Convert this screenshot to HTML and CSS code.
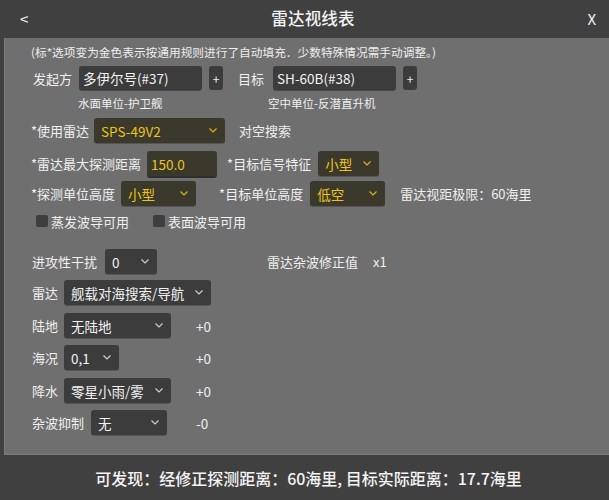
FILE: index.html
```html
<!DOCTYPE html>
<html lang="zh">
<head>
<meta charset="utf-8">
<link rel="stylesheet" href="styles.css">
</head>
<body>
<div class="app">
  <header class="topbar">
    <span class="back">&lt;</span>
    <span class="title">雷达视线表</span>
    <span class="close">X</span>
  </header>
  <main class="panel">
    <p class="note">(标*选项变为金色表示按通用规则进行了自动填充．少数特殊情况需手动调整。)</p>

    <div class="row r-units">
      <span class="lbl">发起方</span>
      <div class="field unit">多伊尔号(#37)</div>
      <div class="plus">+</div>
      <span class="lbl lbl-target">目标</span>
      <div class="field unit unit2">SH-60B(#38)</div>
      <div class="plus">+</div>
    </div>
    <div class="row r-sub">
      <span class="sub sub1">水面单位-护卫舰</span>
      <span class="sub">空中单位-反潜直升机</span>
    </div>

    <div class="row r-radar">
      <span class="lbl">*使用雷达</span>
      <div class="sel gold w-radar"><span>SPS-49V2</span><svg class="chev" viewBox="0 0 8 5"><polyline points="0.5,0.5 4,4 7.5,0.5"/></svg></div>
      <span class="lbl lbl-mode">对空搜索</span>
    </div>

    <div class="row r-range">
      <span class="lbl">*雷达最大探测距离</span>
      <div class="field gold num">150.0</div>
      <span class="lbl lbl-sig">*目标信号特征</span>
      <div class="sel gold w-sig"><span>小型</span><svg class="chev" viewBox="0 0 8 5"><polyline points="0.5,0.5 4,4 7.5,0.5"/></svg></div>
    </div>

    <div class="row r-height">
      <span class="lbl">*探测单位高度</span>
      <div class="sel gold w-h"><span>小型</span><svg class="chev" viewBox="0 0 8 5"><polyline points="0.5,0.5 4,4 7.5,0.5"/></svg></div>
      <span class="lbl lbl-th">*目标单位高度</span>
      <div class="sel gold w-h"><span>低空</span><svg class="chev" viewBox="0 0 8 5"><polyline points="0.5,0.5 4,4 7.5,0.5"/></svg></div>
      <span class="lbl lbl-lim">雷达视距极限：60海里</span>
    </div>

    <div class="row r-checks">
      <label class="chk"><span class="box"></span>蒸发波导可用</label>
      <label class="chk chk2"><span class="box"></span>表面波导可用</label>
    </div>

    <div class="row r-jam">
      <span class="lbl">进攻性干扰</span>
      <div class="sel w-jam"><span>0</span><svg class="chev" viewBox="0 0 8 5"><polyline points="0.5,0.5 4,4 7.5,0.5"/></svg></div>
      <span class="lbl lbl-clutter">雷达杂波修正值</span>
      <span class="lbl lbl-x">x1</span>
    </div>

    <div class="row r-crad">
      <span class="lbl">雷达</span>
      <div class="sel w-crad"><span>舰载对海搜索/导航</span><svg class="chev" viewBox="0 0 8 5"><polyline points="0.5,0.5 4,4 7.5,0.5"/></svg></div>
    </div>

    <div class="row r-land">
      <div class="grp">
        <span class="lbl">陆地</span>
        <div class="sel w-land"><span>无陆地</span><svg class="chev" viewBox="0 0 8 5"><polyline points="0.5,0.5 4,4 7.5,0.5"/></svg></div>
      </div>
      <span class="val">+0</span>
    </div>

    <div class="row r-sea">
      <div class="grp">
        <span class="lbl">海况</span>
        <div class="sel w-sea"><span>0,1</span><svg class="chev" viewBox="0 0 8 5"><polyline points="0.5,0.5 4,4 7.5,0.5"/></svg></div>
      </div>
      <span class="val">+0</span>
    </div>

    <div class="row r-rain">
      <div class="grp">
        <span class="lbl">降水</span>
        <div class="sel w-land"><span>零星小雨/雾</span><svg class="chev" viewBox="0 0 8 5"><polyline points="0.5,0.5 4,4 7.5,0.5"/></svg></div>
      </div>
      <span class="val">+0</span>
    </div>

    <div class="row r-supp">
      <div class="grp grp-wide">
        <span class="lbl">杂波抑制</span>
        <div class="sel w-supp"><span>无</span><svg class="chev" viewBox="0 0 8 5"><polyline points="0.5,0.5 4,4 7.5,0.5"/></svg></div>
      </div>
      <span class="val">-0</span>
    </div>
  </main>
  <footer class="result">可发现：经修正探测距离：60海里, 目标实际距离：17.7海里</footer>
</div>
</body>
</html>
```

FILE: styles.css
```css
* { box-sizing: border-box; }
html, body {
  margin: 0;
  padding: 0;
  background: #404040;
}
body {
  font-family: "Noto Sans CJK SC", "Noto Sans", sans-serif;
  color: #f0f0f0;
  width: 609px;
  height: 500px;
  overflow: hidden;
}
.app {
  display: flex;
  flex-direction: column;
  height: 500px;
}
.topbar {
  height: 38px;
  display: flex;
  align-items: center;
  justify-content: space-between;
  padding: 0 13px 2px 20px;
  color: #f2f2f2;
}
.back { font-size: 15px; width: 20px; }
.close { font-size: 15px; width: 20px; text-align: right; }
.title { font-size: 16.5px; font-weight: 500; letter-spacing: 0.2px; padding-left: 10px; }

.panel {
  margin-left: 4px;
  height: 417px;
  background: #6f6f6f;
  border-left: 1px solid #7c7c7c;
  border-bottom: 1px solid #7c7c7c;
  padding: 6px 0 0 26px;
  display: flex;
  flex-direction: column;
}
.note {
  margin: 0;
  font-size: 11.7px;
  line-height: 16px;
  color: #eeeeee;
}
.row {
  display: flex;
  align-items: center;
  height: 25px;
  font-size: 13px;
}
.lbl { white-space: nowrap; line-height: 25px; }

.r-units { margin-top: 6px; height: 24px; padding-left: 2px; }
.r-units .lbl { padding-right: 7px; }
.field {
  height: 24px;
  background: #3c3c3c;
  border-radius: 3px;
  display: flex;
  align-items: center;
  padding-left: 4px;
  font-size: 13.5px;
  color: #f2f2f2;
  box-shadow: 0 1px 0 #4a4a4a;
}
.unit { width: 123px; }
.plus {
  width: 14px;
  height: 24px;
  margin-left: 7px;
  background: #3c3c3c;
  border-radius: 3px;
  display: flex;
  align-items: center;
  justify-content: center;
  font-size: 12px;
}
.lbl-target { margin-left: 15px; padding-right: 9px !important; }

.r-sub { height: 14px; margin-top: 6px; font-size: 11.5px; padding-left: 47px; }
.sub { line-height: 14px; white-space: nowrap; }
.sub1 { width: 190px; }

.sel {
  height: 25px;
  background: #3c3c3c;
  border-radius: 3px;
  display: flex;
  align-items: center;
  justify-content: space-between;
  padding: 0 8px 0 7px;
  color: #f2f2f2;
  font-size: 13.5px;
  box-shadow: 0 1px 0 #555;
}
.sel span { white-space: nowrap; }
.chev {
  width: 8px;
  height: 5px;
  fill: none;
  stroke: #cfcfcf;
  stroke-width: 1.2;
  flex: none;
}
.gold {
  background: #3b392c;
  color: #ecc418;
}
.gold .chev { stroke: #d8b420; }

.r-radar { margin-top: 8px; }
.r-radar .lbl:first-child { margin-right: 5px; }
.w-radar { width: 131px; }
.lbl-mode { margin-left: 14px; }

.r-range { margin-top: 8px; }
.r-range .lbl:first-child { margin-right: 6px; }
.num { width: 70px; height: 25px; padding-left: 4px; font-size: 13.5px; box-shadow: 0 2px 0 #2e2e2e; }
.lbl-sig { margin-left: 10px; margin-right: 7px; }
.w-sig { width: 61px; }

.r-height { margin-top: 5px; }
.r-height .lbl:first-child { margin-right: 6px; }
.w-h { width: 75px; }
.lbl-th { margin-left: 23px; margin-right: 7px; }
.lbl-lim { margin-left: 15px; }

.r-checks { margin-top: 6px; height: 18px; padding-left: 5px; }
.chk {
  display: flex;
  align-items: center;
  gap: 3px;
  font-size: 13px;
  white-space: nowrap;
}
.box {
  width: 12px;
  height: 12px;
  background: #3e3e3e;
  border-radius: 2px;
  display: inline-block;
}
.chk2 { margin-left: 24px; }

.r-jam { margin-top: 19px; padding-left: 1px; }
.r-jam .lbl:first-child { margin-right: 8px; }
.w-jam { width: 52px; }
.lbl-clutter { margin-left: 110px; }
.lbl-x { margin-left: 15px; }

.r-crad { margin-top: 6px; padding-left: 1px; }
.r-crad .lbl { margin-right: 6px; }
.w-crad { width: 147px; }

.grp {
  width: 164px;
  display: flex;
  align-items: center;
  gap: 6px;
}
.grp-wide { gap: 7px; }
.val { white-space: nowrap; font-size: 13.5px; }

.r-land { margin-top: 8px; padding-left: 1px; }
.r-sea { margin-top: 7px; padding-left: 1px; }
.r-rain { margin-top: 8px; padding-left: 1px; }
.r-supp { margin-top: 7px; padding-left: 1px; }
.w-land { width: 107px; }
.w-sea { width: 55px; }
.w-supp { width: 76px; }

.result {
  flex: 1;
  display: flex;
  align-items: center;
  justify-content: center;
  font-size: 16px;
  font-weight: 500;
  color: #f4f4f4;
  padding-left: 8px;
}
```
